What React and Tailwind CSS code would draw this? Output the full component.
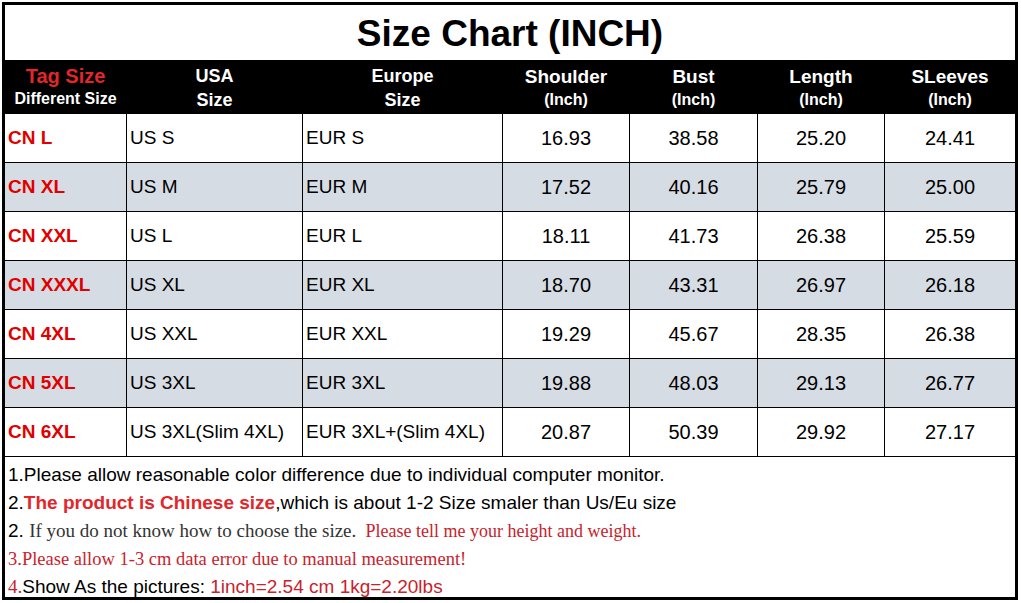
const rows = [
  ["CN L", "US S", "EUR S", "16.93", "38.58", "25.20", "24.41"],
  ["CN XL", "US M", "EUR M", "17.52", "40.16", "25.79", "25.00"],
  ["CN XXL", "US L", "EUR L", "18.11", "41.73", "26.38", "25.59"],
  ["CN XXXL", "US XL", "EUR XL", "18.70", "43.31", "26.97", "26.18"],
  ["CN 4XL", "US XXL", "EUR XXL", "19.29", "45.67", "28.35", "26.38"],
  ["CN 5XL", "US 3XL", "EUR 3XL", "19.88", "48.03", "29.13", "26.77"],
  ["CN 6XL", "US 3XL(Slim 4XL)", "EUR 3XL+(Slim 4XL)", "20.87", "50.39", "29.92", "27.17"],
];

const measures = ["Shoulder", "Bust", "Length", "SLeeves"];

export default function App() {
  return (
    <div className="w-[1021px] h-[603px] bg-white pt-[2px] pl-[2px] font-['Liberation_Sans',Arial,sans-serif]">
      <div className="w-[1016px] h-[598px] border-[3px] border-black flex flex-col overflow-hidden">
        {/* title */}
        <div className="h-[55px] shrink-0 flex items-center justify-center text-[37px] font-bold text-black leading-none pt-[2px]">
          Size Chart (INCH)
        </div>

        {/* table */}
        <div className="shrink-0 grid grid-cols-[121px_175px_199px_126px_127px_126px_1fr] gap-px bg-black border-b border-black">
          <div className="h-[53px] bg-black flex flex-col items-center justify-center font-bold pt-[2px]">
            <span className="text-[20px] leading-[23px] text-[#e3262a]">Tag Size</span>
            <span className="text-[16px] leading-[22px] text-white">Different Size</span>
          </div>
          <div className="h-[53px] bg-black flex flex-col items-center justify-center font-bold text-white text-[18px] leading-[24px] pt-[2px]">
            <span>USA</span>
            <span>Size</span>
          </div>
          <div className="h-[53px] bg-black flex flex-col items-center justify-center font-bold text-white text-[18px] leading-[24px] pt-[2px]">
            <span>Europe</span>
            <span>Size</span>
          </div>
          {measures.map((m) => (
            <div
              key={m}
              className="h-[53px] bg-black flex flex-col items-center justify-center font-bold text-white pt-[2px] font-['Liberation_Sans_Narrow','Liberation_Sans',Arial,sans-serif]"
            >
              <span className="text-[19px] leading-[24px]">{m}</span>
              <span className="text-[16px] leading-[22px]">(Inch)</span>
            </div>
          ))}

          {rows.map((r, i) => {
            const bg = i % 2 === 1 ? "bg-[#d6dce4]" : "bg-white";
            return [
              <div key={`${i}a`} className={`h-[48px] ${bg} flex items-center pl-[3px] text-[19px] font-bold text-[#e00000]`}>
                {r[0]}
              </div>,
              <div key={`${i}b`} className={`h-[48px] ${bg} flex items-center pl-[3px] text-[19px] text-black`}>
                {r[1]}
              </div>,
              <div key={`${i}c`} className={`h-[48px] ${bg} flex items-center pl-[3px] text-[19px] text-black`}>
                {r[2]}
              </div>,
              ...r.slice(3).map((v, j) => (
                <div key={`${i}${j}`} className={`h-[48px] ${bg} flex items-center justify-center text-[20px] text-black`}>
                  {v}
                </div>
              )),
            ];
          })}
        </div>

        {/* notes */}
        <div className="pt-[4px] pl-[3px] text-black leading-[28px] whitespace-nowrap">
          <div className="text-[19px]">1.Please allow reasonable color difference due to individual computer monitor.</div>
          <div className="text-[19px]">
            2.<span className="font-bold text-[#e3262a]">The product is Chinese size</span>,which is about 1-2 Size smaler than Us/Eu size
          </div>
          <div className="text-[19px]">
            2.{" "}
            <span className="font-['Liberation_Serif','Times_New_Roman',serif] text-[#333]">
              If you do not know how to choose the size.
            </span>{" "}
            <span className="font-['Liberation_Serif','Times_New_Roman',serif] text-[18px] text-[#c8232c] ml-[4px]">
              Please tell me your height and weight.
            </span>
          </div>
          <div className="text-[18.5px] font-['Liberation_Serif','Times_New_Roman',serif] text-[#c8232c]">
            3.Please allow 1-3 cm data error due to manual measurement!
          </div>
          <div className="text-[19px]">
            <span className="font-['Liberation_Serif','Times_New_Roman',serif] text-[#c8232c]">4.</span>Show As the pictures:{" "}
            <span className="text-[#c8232c]">1inch=2.54 cm 1kg=2.20lbs</span>
          </div>
        </div>
      </div>
    </div>
  );
}
